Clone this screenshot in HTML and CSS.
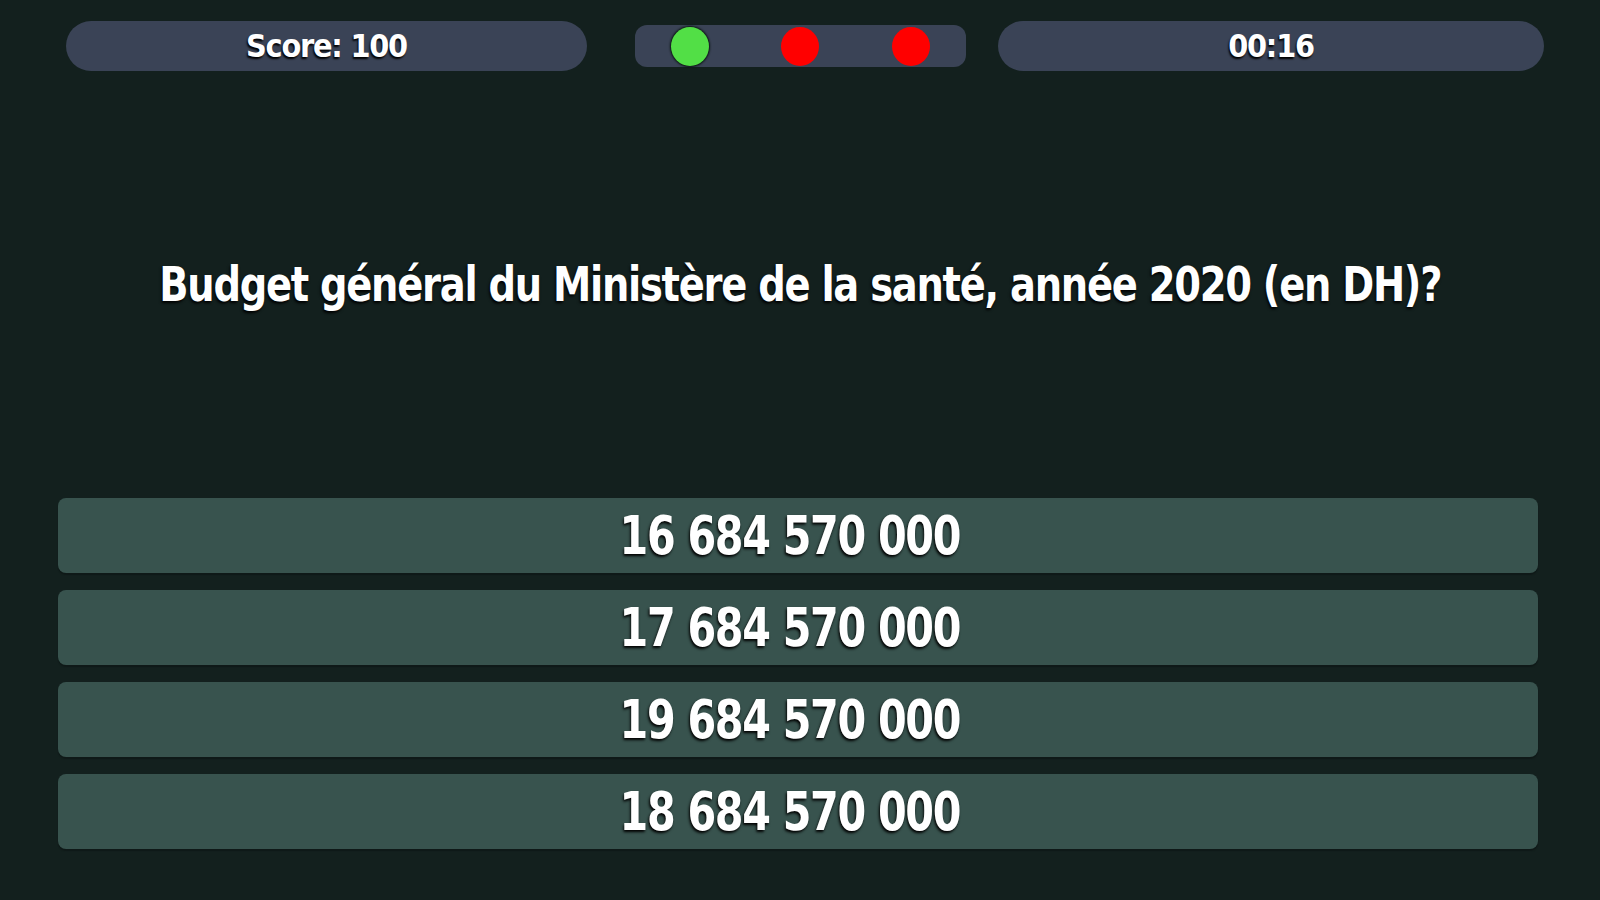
FILE: index.html
```html
<!DOCTYPE html>
<html lang="fr">
<head>
    <meta charset="UTF-8">
    <meta name="viewport" content="width=device-width, initial-scale=1.0">
    <title>Quiz</title>
    <link rel="stylesheet" href="styles.css">
</head>
<body>

    <div class="game">
        <div class="topbar">
            <div class="pill score">Score: 100</div>
            <div class="lives">
                <span class="dot good"></span>
                <span class="dot bad"></span>
                <span class="dot bad"></span>
            </div>
            <div class="pill timer">00:16</div>
        </div>

        <h1 class="question"><span class="squeeze">Budget général du Ministère de la santé, année 2020 (en DH)?</span></h1>

        <div class="answers">
            <button class="answer"><span class="squeeze">16 684 570 000</span></button>
            <button class="answer"><span class="squeeze">17 684 570 000</span></button>
            <button class="answer"><span class="squeeze">19 684 570 000</span></button>
            <button class="answer"><span class="squeeze">18 684 570 000</span></button>
        </div>
    </div>

</body>
</html>
```

FILE: styles.css
```css
body {
    margin: 0;
    background-color: #13201e;
    font-family: 'DejaVu Sans', sans-serif;
    font-stretch: condensed;
    font-weight: bold;
    color: #fff;
}

.game {
    height: 900px;
    box-sizing: border-box;
    padding-top: 21px;
}

.topbar {
    display: flex;
    align-items: center;
    padding-left: 66px;
}

.pill {
    height: 50px;
    border-radius: 25px;
    background-color: #3a4356;
    display: flex;
    align-items: center;
    justify-content: center;
    font-size: 32px;
    letter-spacing: -1.2px;
    text-shadow: -1px 2px 2px #000;
}

.score {
    width: 521px;
}

.lives {
    width: 331px;
    height: 42px;
    margin-left: 48px;
    margin-right: 32px;
    border-radius: 12px;
    background-color: #3a4356;
    display: flex;
    align-items: center;
    justify-content: space-around;
}

.dot {
    width: 38px;
    height: 39px;
    border-radius: 50%;
}

.dot.good {
    background-color: #52df46;
    box-shadow: 0 0 2px 1px #0b1412;
}

.dot.bad {
    background-color: #ff0000;
}

.timer {
    width: 546px;
}

/* narrow the glyphs to get close to the original condensed face */
.squeeze {
    display: inline-block;
    transform: scaleX(0.89);
}

.question {
    margin: 183px 0 184px;
    height: 60px;
    line-height: 60px;
    text-align: center;
    font-size: 48px;
    letter-spacing: -1.4px;
    white-space: nowrap;
    text-shadow: -1px 2px 3px #000;
}

.answers {
    width: 1480px;
    margin-left: 58px;
    display: flex;
    flex-direction: column;
    gap: 17px;
}

.answer {
    height: 75px;
    padding: 0 16px 0 0;
    border: none;
    border-radius: 8px;
    background-color: #38534e;
    box-shadow: 0 2px 1px #0f1918;
    color: #fff;
    font-family: inherit;
    font-stretch: inherit;
    font-weight: bold;
    font-size: 53px;
    letter-spacing: -1.5px;
    text-shadow: -1px 2px 3px #000;
    cursor: pointer;
}

.answer .squeeze {
    transform: scaleX(0.865);
}

.answer:hover {
    background-color: #3f5d57;
}
```
